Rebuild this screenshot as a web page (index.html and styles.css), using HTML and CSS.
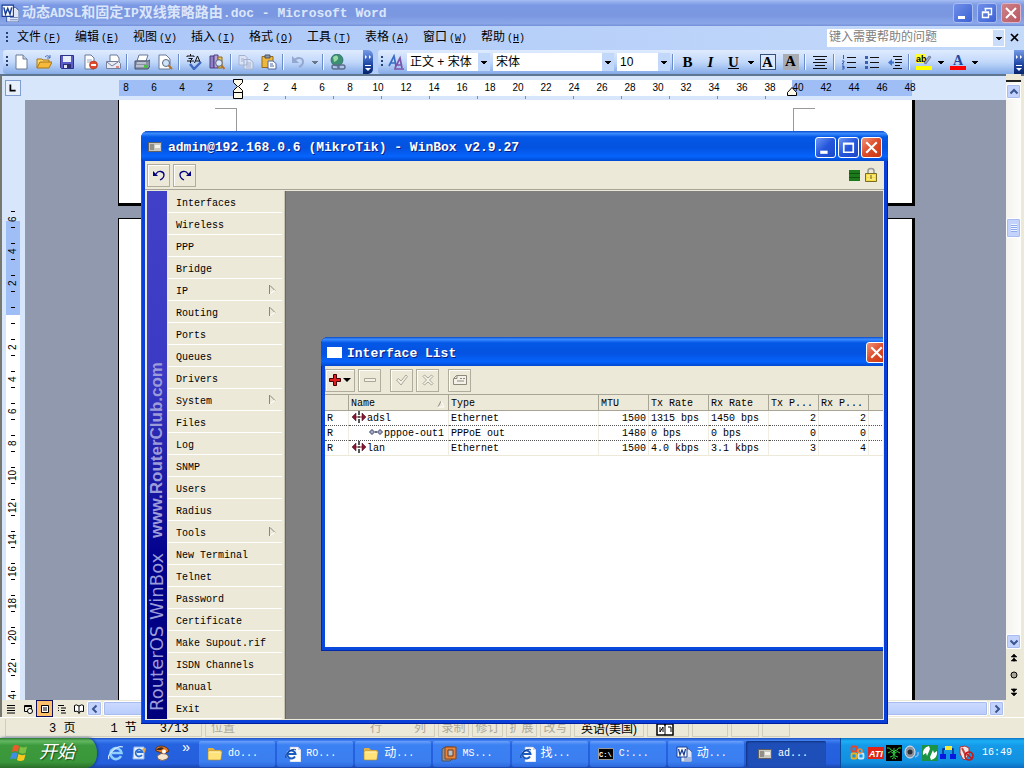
FILE: index.html
```html
<!DOCTYPE html>
<html lang="zh-CN">
<head>
<meta charset="utf-8">
<title>动态ADSL和固定IP双线策略路由.doc - Microsoft Word</title>
<link rel="stylesheet" href="styles.css">
</head>
<body>
<svg width="0" height="0" class="defs" aria-hidden="true">
  <symbol id="tri" viewBox="0 0 8 8"><path d="M1 3h6v1H6v1H5v1H3V5H2V4H1z" fill="#000"/></symbol>
  <symbol id="folder" viewBox="0 0 16 16"><path d="M1 3q0-1 1-1h4l2 2h5q1 0 1 1v8H1z" fill="#e8b33c"/><path d="M1 6q0-1 1-1h12q1 0 1 1l-1 7q0 1-1 1H2q-1 0-1-1z" fill="#ffe27a" stroke="#b98a20" stroke-width=".6"/><path d="M2 6h11" stroke="#fff6c8"/></symbol>
  <symbol id="iedoc" viewBox="0 0 16 16"><path d="M5 1h8l3 3v12H5z" fill="#fff" stroke="#9fb0d0" stroke-width=".6"/><path d="M13 1v3h3" fill="#cdd8ee"/><circle cx="6" cy="8.500" r="4.500" fill="#fff"/><path d="M10 10.500A4 4 0 1 1 10.500 8H3.500" fill="none" stroke="#1c5cc0" stroke-width="2"/><path d="M1 12C-1 8 8 1 11 4" fill="none" stroke="#123c8c"/></symbol>
  <symbol id="worddoc" viewBox="0 0 16 16"><path d="M5 3h8l3 3v10H5z" fill="#dfe6f7" stroke="#274a8c" stroke-width=".7"/><path d="M8 12h7M8 14h7" stroke="#7d8fbf"/><path d="M1 1h10v10H1z" fill="#fff" stroke="#173d94"/><path d="M2.500 3l1.500 6 2-5 2 5 1.500-6" fill="none" stroke="#173d94" stroke-width="1.300"/></symbol>
  <symbol id="router" viewBox="0 0 14 12"><path d="M.5 1.500h13v9H.5z" fill="#c8c8c0" stroke="#606060"/><path d="M2 3h4v6H2z" fill="#909088"/><path d="M7 4h5v3H7z" fill="#f2f2ee"/></symbol>
  <symbol id="sub" viewBox="0 0 7 9"><path d="M.5 9V0" stroke="#8a877a"/><path d="M1 .5l5 5" stroke="#8a877a" fill="none"/><path d="M1 8.500l5-3" stroke="#fff" fill="none"/></symbol>
  <symbol id="eth" viewBox="0 0 14 12"><path d="M0 6l4-4v8zM14 6l-4-4v8z" fill="#8c1630" stroke="#301018" stroke-width=".5"/><path d="M4 5.500h2v1H4zM8 5.500h2v1H8z" fill="#8c1630"/><path d="M7 0v4M7 5v2M7 8v4" stroke="#111" stroke-width="1.400"/></symbol>
  <symbol id="ppp" viewBox="0 0 14 8"><path d="M.5 4L3 1.500 5.500 4 3 6.500zM8.500 4L11 1.500 13.500 4 11 6.500z" fill="#a9afc8" stroke="#333b60"/><path d="M6 4h2" stroke="#333b60" stroke-width="1.500"/></symbol>
</svg>

<main class="word">
  <header class="word-title">
    <svg class="i18" viewBox="0 0 16 16"><use href="#worddoc"/></svg>
    <h1 class="word-name">动态<span class="lt">ADSL</span>和固定<span class="lt">IP</span>双线策略路由<span class="lt">.doc - Microsoft Word</span></h1>
    <div class="caption">
      <button class="cap cap-dim" aria-label="最小化"><svg viewBox="0 0 18 18"><path d="M4 12h7v3H4z" fill="#fff"/></svg></button>
      <button class="cap cap-dim" aria-label="还原"><svg viewBox="0 0 18 18"><path d="M7.500 7V4.500h6v6H11M6.500 4.500h7M4.500 8h6v5.500h-6zM4 8.500h7" fill="none" stroke="#fff" stroke-width="1.400"/></svg></button>
      <button class="cap cap-dimred" aria-label="关闭"><svg viewBox="0 0 18 18"><path d="M4 4l10 10M14 4L4 14" stroke="#fff" stroke-width="2"/></svg></button>
    </div>
  </header>

  <nav class="menubar">
    <span class="grip"></span>
    <a href="#file">文件<span class="sm">(<u>F</u>)</span></a><a href="#edit">编辑<span class="sm">(<u>E</u>)</span></a><a href="#view">视图<span class="sm">(<u>V</u>)</span></a><a href="#insert">插入<span class="sm">(<u>I</u>)</span></a><a href="#format">格式<span class="sm">(<u>O</u>)</span></a><a href="#tools">工具<span class="sm">(<u>T</u>)</span></a><a href="#table">表格<span class="sm">(<u>A</u>)</span></a><a href="#window">窗口<span class="sm">(<u>W</u>)</span></a><a href="#help">帮助<span class="sm">(<u>H</u>)</span></a>
    <div class="ask"><input type="text" aria-label="帮助" placeholder="键入需要帮助的问题"><button class="ask-arrow" aria-label="展开"><svg class="tri" viewBox="0 0 8 8"><use href="#tri"/></svg></button></div>
    <button class="doc-close" aria-label="关闭文档"><svg viewBox="0 0 10 10"><path d="M1 1l7 7M8 1L1 8" stroke="#000" stroke-width="1.700"/></svg></button>
  </nav>

  <div class="toolbars">
    <div class="toolbar">
      <span class="grip"></span>
      <button class="tb" aria-label="新建"><svg viewBox="0 0 16 16"><path d="M3 1h7l4 4v10H3z" fill="#fff" stroke="#6b7895"/><path d="M10 1v4h4" fill="#c9d6ef" stroke="#6b7895"/></svg></button>
      <button class="tb" aria-label="打开"><svg viewBox="0 0 16 16"><path d="M1 14V5h5l1 1h6v3" fill="#ffd56a" stroke="#a87412"/><path d="M1 14l3-6h12l-3 6z" fill="#f6b93c" stroke="#a87412"/><path d="M9 3q3-3 5 1M14 1v3h-3" fill="none" stroke="#4770b8"/></svg></button>
      <button class="tb" aria-label="保存"><svg viewBox="0 0 16 16"><path d="M1.500 1.500h13v13h-12l-1-1z" fill="#5c5cc8" stroke="#303088"/><path d="M4 2h8v6H4z" fill="#e9eefb"/><path d="M4 10h8v4H4z" fill="#2c2c70"/><path d="M5 11h3v3H5z" fill="#e0e4f4"/></svg></button>
      <button class="tb" aria-label="权限"><svg viewBox="0 0 16 16"><path d="M3 1h6l3 3v11H3z" fill="#fff" stroke="#6b7895"/><path d="M5 6h5M5 8h4" stroke="#9aa8c8"/><circle cx="11.500" cy="11" r="4" fill="#e14a2c" stroke="#9c2412" stroke-width=".5"/><path d="M9 11h5" stroke="#fff" stroke-width="1.800"/></svg></button>
      <button class="tb" aria-label="邮件"><svg viewBox="0 0 16 16"><path d="M5 1h7l2 3v5H5z" fill="#fff" stroke="#6b7895"/><path d="M1.500 7.500h12l2 2v5h-14z" fill="#e8ebf4" stroke="#77809a"/><path d="M2 8l5 4 6-4" fill="none" stroke="#77809a"/><path d="M11 12h3v2h-3z" fill="#d88"/></svg></button>
      <span class="sep"></span>
      <button class="tb" aria-label="打印"><svg viewBox="0 0 16 16"><path d="M5 1h9l-2 6H3z" fill="#fff" stroke="#6b7895"/><path d="M1 7h13l2-1v6l-2 3H1z" fill="#8b93a8" stroke="#454e66"/><path d="M3 9h9M2 12h10" stroke="#e8ecf5"/><path d="M10 11h4v3h-4z" fill="#4cbb48"/></svg></button>
      <button class="tb" aria-label="预览"><svg viewBox="0 0 16 16"><path d="M2 1h7l4 4v10H2z" fill="#fff" stroke="#6b7895"/><circle cx="9" cy="9" r="3.500" fill="#cfe4fa" stroke="#5a6780"/><path d="M11.500 11.500l3.500 3.500" stroke="#b5722a" stroke-width="2"/></svg></button>
      <span class="sep"></span>
      <button class="tb" aria-label="拼写"><svg viewBox="0 0 16 16"><path d="M1 3V2h7v1M4.500 0v2M2.500 4.500h4l-2 2V9M1 7h7M8.500 9l3-7 3 7M9.500 7h4" fill="none" stroke="#111"/><path d="M4 10l4 5 7-7" fill="none" stroke="#3f68c0" stroke-width="2.400"/></svg></button>
      <button class="tb" aria-label="信息检索"><svg viewBox="0 0 16 16"><path d="M1 2h4v12H1z" fill="#8f7fc4" stroke="#4b3f80"/><path d="M5 1h4v13H5z" fill="#b9a0d8" stroke="#4b3f80"/><path d="M9 3h4v11H9z" fill="#e9c860" stroke="#8a6d20"/><circle cx="10" cy="9" r="3.300" fill="#dcebfa" stroke="#596680"/><path d="M12.500 11.500l3 3.500" stroke="#b5722a" stroke-width="2"/></svg></button>
      <span class="sep"></span>
      <button class="tb" aria-label="复制"><svg viewBox="0 0 16 16"><path d="M1 1.500h6l2 2V11H1zM6 5.500h6l3 2.500v7H6z" fill="#dbe4f6" stroke="#a5b2cf"/><path d="M3 5h3M3 7h3M8 9h5M8 11h5M8 13h5" stroke="#a5b2cf"/></svg></button>
      <button class="tb" aria-label="粘贴"><svg viewBox="0 0 16 16"><path d="M1 2.500h11v11H1z" fill="#efb73c" stroke="#94691a"/><path d="M4 1h5v3H4z" fill="#8e96aa" stroke="#4b5265"/><path d="M7 7h5l3 2.500V15H7z" fill="#fff" stroke="#4c66a4"/><path d="M9 10h3M9 12h4" stroke="#4c66a4"/></svg></button>
      <span class="sep"></span>
      <button class="tb" aria-label="撤消"><svg viewBox="0 0 16 16"><path d="M4 7c3-4 9-4 9 1 0 2-2 4-4 5" fill="none" stroke="#93a7cf" stroke-width="2"/><path d="M2 2v7h7z" fill="#93a7cf"/></svg></button>
      <button class="arr dim" aria-label="撤消列表"><svg class="tri" viewBox="0 0 8 8"><use href="#tri"/></svg></button>
      <span class="sep"></span>
      <button class="tb" aria-label="超链接"><svg viewBox="0 0 16 16"><circle cx="7" cy="6" r="6" fill="#3d8f74" stroke="#1d5560" stroke-width=".6"/><path d="M3 3q4-3 5 0T4 8z" fill="#9ad8a4"/><rect x="2" y="11" width="7" height="4" rx="2" fill="none" stroke="#5f6d8a" stroke-width="1.400"/><rect x="8" y="11" width="7" height="4" rx="2" fill="none" stroke="#5f6d8a" stroke-width="1.400"/></svg></button>
      <span class="spring"></span>
      <button class="cap-end" aria-label="工具栏选项"><svg viewBox="0 0 10 24"><path d="M2 5l2 2-2 2zM6 5l2 2-2 2z" fill="#fff"/><path d="M2 15.500h6" stroke="#fff"/><path d="M2 18h6l-3 3z" fill="#fff"/></svg></button>
    </div>
    <div class="toolbar toolbar-fmt">
      <span class="grip"></span>
      <button class="tb" aria-label="样式和格式"><svg viewBox="0 0 16 16"><path d="M1 12L6 2l2 10M3 9h5" fill="none" stroke="#3a6cc4" stroke-width="1.700"/><path d="M7 14l5-10 2 10M9 11h5M6 15h10" fill="none" stroke="#7b55a8" stroke-width="1.700"/></svg></button>
      <span class="combo combo-style"><select aria-label="样式"><option>正文 + 宋体</option></select><svg viewBox="0 0 8 8"><use href="#tri"/></svg></span>
      <span class="combo combo-font"><select aria-label="字体"><option>宋体</option></select><svg viewBox="0 0 8 8"><use href="#tri"/></svg></span>
      <span class="combo combo-size"><select aria-label="字号"><option>10</option></select><svg viewBox="0 0 8 8"><use href="#tri"/></svg></span>
      <span class="sep"></span>
      <button class="tb ltr"><b>B</b></button>
      <button class="tb ltr"><i>I</i></button>
      <button class="tb ltr"><u>U</u></button>
      <button class="arr" aria-label="下划线列表"><svg class="tri" viewBox="0 0 8 8"><use href="#tri"/></svg></button>
      <button class="tb ltr"><span class="boxed">A</span></button>
      <button class="tb ltr"><span class="shaded">A</span></button>
      <span class="sep"></span>
      <button class="tb" aria-label="两端对齐"><svg viewBox="0 0 16 16"><path d="M1 2.500h14M3 5.500h10M1 8.500h14M3 11.500h10M1 14.500h14" stroke="#111"/></svg></button>
      <span class="sep"></span>
      <button class="tb" aria-label="编号"><svg viewBox="0 0 16 16"><path d="M6 3.500h9M6 8.500h9M6 13.500h9" stroke="#111"/><path d="M2.500 1v4M1 7h2v1L1 10h2M1 12h2v1H1.500 3v2H1" fill="none" stroke="#3a5fae"/></svg></button>
      <button class="tb" aria-label="项目符号"><svg viewBox="0 0 16 16"><path d="M6 3.500h9M6 8.500h9M6 13.500h9" stroke="#111"/><path d="M1 2h3v3H1zM1 7h3v3H1zM1 12h3v3H1z" fill="#3a5fae"/></svg></button>
      <button class="tb" aria-label="缩进"><svg viewBox="0 0 16 16"><path d="M6 2.500h9M8 5.500h7M8 8.500h7M8 11.500h5M6 14.500h9" stroke="#111"/><path d="M5 5v7L1 8.500z" fill="#3f73cf"/><path d="M4 8.500h3" stroke="#3f73cf" stroke-width="2"/></svg></button>
      <span class="sep"></span>
      <button class="tb" aria-label="突出显示"><svg viewBox="0 0 16 16"><path d="M0 0h10v9H0z" fill="#ffff30"/><text x="0" y="8" class="ab">ab</text><path d="M8 9l5-7 2 1-5 7z" fill="#9aa7c4" stroke="#4c5878" stroke-width=".6"/><path d="M0 12h16v4H0z" fill="#ff0"/></svg></button>
      <button class="arr" aria-label="突出显示列表"><svg class="tri" viewBox="0 0 8 8"><use href="#tri"/></svg></button>
      <button class="tb" aria-label="字体颜色"><svg viewBox="0 0 16 16"><text x="3" y="11" class="fa">A</text><path d="M0 12h16v4H0z" fill="#f00"/></svg></button>
      <button class="arr" aria-label="颜色列表"><svg class="tri" viewBox="0 0 8 8"><use href="#tri"/></svg></button>
      <span class="spring"></span>
      <button class="cap-end" aria-label="工具栏选项"><svg viewBox="0 0 10 24"><path d="M2 5l2 2-2 2zM6 5l2 2-2 2z" fill="#fff"/><path d="M2 15.500h6" stroke="#fff"/><path d="M2 18h6l-3 3z" fill="#fff"/></svg></button>
    </div>
  </div>

  <div class="work">
    <div class="editor">
      <div class="hruler">
        <div class="tab-box"><svg viewBox="0 0 16 16"><path d="M5 4v7h6" fill="none" stroke="#000" stroke-width="2"/></svg></div>
        <div class="htrack">
          <div class="hnums"><span>8</span><span>6</span><span>4</span><span>2</span><span class="mark"><svg viewBox="0 0 10 22"><path d="M.5 1.500h9v3l-4 4 4 4v2h-9v-2l4-4-4-4zM.5 14.500h9v6h-9z" fill="#fdf9e8" stroke="#000"/></svg></span><span>2</span><span>4</span><span>6</span><span>8</span><span>10</span><span>12</span><span>14</span><span>16</span><span>18</span><span>20</span><span>22</span><span>24</span><span>26</span><span>28</span><span>30</span><span>32</span><span>34</span><span>36</span><span>38</span><span class="indent">40<svg viewBox="0 0 10 9"><path d="M.5 8.500v-3l4.500-5 4.500 5v3z" fill="#fdf9e8" stroke="#000"/></svg></span><span>42</span><span>44</span><span>46</span><span>48</span></div>
          <div class="hticks"></div>
        </div>
      </div>
      <div class="body">
        <div class="vruler"><div class="vtrack">
          <span>6</span><span>4</span><span>2</span><span></span><span>2</span><span>4</span><span>6</span><span>8</span><span>10</span><span>12</span><span>14</span><span>16</span><span>18</span><span>20</span><span>22</span><span>24</span>
        </div></div>
        <div class="doc">
          <div class="page page-a"><svg viewBox="0 0 22 24"><path d="M0 .5h22M21.500 0v24" stroke="#999"/></svg><svg viewBox="0 0 22 24"><path d="M0 .5h22M.5 0v24" stroke="#999"/></svg></div>
          <div class="page page-b"></div>
        </div>
      </div>
      <div class="hscroll">
        <button class="view" aria-label="普通视图"><svg viewBox="0 0 12 12"><path d="M2 2.500h8M2 5h8M2 7.500h8M2 10h8" stroke="#000"/></svg></button>
        <button class="view" aria-label="Web版式"><svg viewBox="0 0 12 12"><path d="M2.500 2.500h7v6h-7zM2 3.500h8" fill="none" stroke="#000"/><circle cx="8" cy="8" r="2.500" fill="#fff" stroke="#000"/></svg></button>
        <button class="view on" aria-label="页面视图"><svg viewBox="0 0 12 12"><path d="M2.500 2.500h7v7h-7z" fill="#fff" stroke="#000"/><path d="M4 5h4M4 7h4" stroke="#000"/></svg></button>
        <button class="view" aria-label="大纲视图"><svg viewBox="0 0 12 12"><path d="M2 2.500h6M5 5h5M5 7.500h4M5 10h5M2 5h1M2 7.500h1" stroke="#000"/></svg></button>
        <button class="view" aria-label="阅读版式"><svg viewBox="0 0 12 12"><path d="M6 3Q3 1 1.500 2.500v6Q4 7.500 6 9.500 8 7.500 10.500 8.500v-6Q9 1 6 3zM6 3v8" fill="#fff" stroke="#000"/></svg></button>
        <button class="sb" aria-label="左移"><svg viewBox="0 0 10 10"><path d="M6.500 1.500L3 5l3.500 3.500" fill="none" stroke="#3a5590" stroke-width="2"/></svg></button>
        <span class="thumb-h"></span>
        <button class="sb" aria-label="右移"><svg viewBox="0 0 10 10"><path d="M3.500 1.500L7 5 3.500 8.500" fill="none" stroke="#3a5590" stroke-width="2"/></svg></button>
      </div>
    </div>
    <div class="vscroll">
      <span class="split"></span>
      <button class="sb" aria-label="上移"><svg viewBox="0 0 10 10"><path d="M1.500 6.500L5 3l3.500 3.500" fill="none" stroke="#3a5590" stroke-width="2"/></svg></button>
      <span class="vgap-a"></span>
      <span class="thumb-v"></span>
      <span class="vgap-b"></span>
      <button class="sb" aria-label="下移"><svg viewBox="0 0 10 10"><path d="M1.500 3.500L5 7l3.500-3.500" fill="none" stroke="#3a5590" stroke-width="2"/></svg></button>
      <button class="nav" aria-label="前一页"><svg viewBox="0 0 10 10"><path d="M5 1l3 3H2zM5 5l3 3H2zM5 3v6" stroke="#000" stroke-width=".5"/></svg></button>
      <button class="nav" aria-label="选择浏览对象"><svg viewBox="0 0 10 10"><circle cx="5" cy="5" r="3" fill="#a9a697" stroke="#000"/></svg></button>
      <button class="nav" aria-label="下一页"><svg viewBox="0 0 10 10"><path d="M5 9l3-3H2zM5 5l3-3H2zM5 1v6" stroke="#000" stroke-width=".5"/></svg></button>
    </div>
  </div>

  <footer class="status">
    <div class="panel p-page"><span>3 页</span><span>1 节</span><span>3/13</span></div>
    <div class="panel p-pos"><span>位置</span><span>行</span><span>列</span></div>
    <div class="panel off">录制</div><div class="panel off">修订</div><div class="panel off">扩展</div><div class="panel off">改写</div>
    <div class="panel lang">英语(美国)</div>
    <div class="panel book"><svg viewBox="0 0 18 14"><path d="M1 2h7l1 1 1-1h7v11H1z" fill="#fff" stroke="#000" stroke-width="1.500"/><path d="M9 3v10M4 5v5l3-5v5M12 5h3v5" fill="none" stroke="#000"/></svg></div>
    <div class="panel e1"></div><div class="panel e2"></div><div class="panel e3"></div>
  </footer>
</main>

<section class="winbox">
  <header class="wtitle">
    <svg class="wicon" viewBox="0 0 14 12"><use href="#router"/></svg>
    <h2>admin@192.168.0.6 (MikroTik) - WinBox v2.9.27</h2>
    <button class="cap cap-blue" aria-label="最小化"><svg viewBox="0 0 18 18"><path d="M4 12h7v3H4z" fill="#fff"/></svg></button>
    <button class="cap cap-blue" aria-label="最大化"><svg viewBox="0 0 18 18"><path d="M4.500 5h9v8.500h-9zM4 5.500h10" fill="none" stroke="#fff" stroke-width="1.600"/></svg></button>
    <button class="cap cap-red" aria-label="关闭"><svg viewBox="0 0 18 18"><path d="M4 4l10 10M14 4L4 14" stroke="#fff" stroke-width="2"/></svg></button>
  </header>
  <div class="wtools">
    <button class="sq" aria-label="Undo"><svg viewBox="0 0 14 12"><path d="M4 5c2-4 8-3 8 1 0 3-2 4-4 5" fill="none" stroke="#000080" stroke-width="1.300"/><path d="M1 2v5h5z" fill="#000080"/></svg></button>
    <button class="sq" aria-label="Redo"><svg viewBox="0 0 14 12"><path d="M10 5C8 1 2 2 2 6c0 3 2 4 4 5" fill="none" stroke="#000080" stroke-width="1.300"/><path d="M13 2v5H8z" fill="#000080"/></svg></button>
    <span class="spring"></span>
    <span class="load"></span>
    <svg class="lock" viewBox="0 0 14 16"><path d="M4 7V4q0-2.500 3-2.500T10 4v3" fill="none" stroke="#999" stroke-width="1.600"/><path d="M1.500 6.500h11v8h-11z" fill="#f4dc48" stroke="#7a6c20"/><path d="M3 9h8M3 12h8" stroke="#fff7a8"/><path d="M7 8v4" stroke="#6b5c10"/></svg>
  </div>
  <div class="wbody">
    <aside class="stripe"><span class="s1">RouterOS WinBox</span><span class="s2">www.RouterClub.com</span></aside>
    <nav class="wmenu">
      <button>Interfaces</button><button>Wireless</button><button>PPP</button><button>Bridge</button>
      <button>IP<svg viewBox="0 0 7 9"><use href="#sub"/></svg></button><button>Routing<svg viewBox="0 0 7 9"><use href="#sub"/></svg></button>
      <button>Ports</button><button>Queues</button><button>Drivers</button>
      <button>System<svg viewBox="0 0 7 9"><use href="#sub"/></svg></button>
      <button>Files</button><button>Log</button><button>SNMP</button><button>Users</button><button>Radius</button>
      <button>Tools<svg viewBox="0 0 7 9"><use href="#sub"/></svg></button>
      <button>New Terminal</button><button>Telnet</button><button>Password</button><button>Certificate</button><button>Make Supout.rif</button><button>ISDN Channels</button><button>Manual</button><button>Exit</button>
    </nav>
    <div class="mdi">
      <section class="ilist">
        <header class="wtitle">
          <span class="blank"></span>
          <h2>Interface List</h2>
          <button class="cap cap-red" aria-label="关闭"><svg viewBox="0 0 18 18"><path d="M4 4l10 10M14 4L4 14" stroke="#fff" stroke-width="2"/></svg></button>
        </header>
        <div class="itools">
          <button class="sq add" aria-label="Add"><svg viewBox="0 0 22 12"><path d="M4.500.5h3v4h4v3h-4v4h-3v-4h-4v-3h4z" fill="#e02020" stroke="#400"/><path d="M14 4h8l-4 4z" fill="#000"/></svg></button>
          <button class="sq" aria-label="Remove"><svg viewBox="0 0 14 12"><path d="M1.500 4.500h11v3h-11z" fill="#f4f2e8" stroke="#aaa796"/></svg></button>
          <button class="sq gap" aria-label="Enable"><svg viewBox="0 0 14 12"><path d="M1.500 6l2-1.500L6 7l5-6 1.500 1.500L6 11z" fill="#f4f2e8" stroke="#aaa796"/></svg></button>
          <button class="sq" aria-label="Disable"><svg viewBox="0 0 14 12"><path d="M2 2.500L3.500 1 7 4l3.500-3L12 2.500 8.500 6l3.500 3.500-1.500 1.500L7 8l-3.500 3L2 9.500 5.500 6z" fill="#f4f2e8" stroke="#aaa796"/></svg></button>
          <button class="sq gap" aria-label="Comment"><svg viewBox="0 0 14 12"><path d="M.5 4.500l3-3h10v9H.5z" fill="#f4f2e8" stroke="#8d8a7c"/><path d="M4 1.500v3H1M7 4.500h2M10 4.500h2M4 7h7" fill="none" stroke="#8d8a7c"/></svg></button>
        </div>
        <div class="igrid">
        <table>
          <colgroup><col class="c24"><col class="c100"><col class="c150"><col class="c50"><col class="c60"><col class="c60"><col class="c50"><col class="c50"><col></colgroup>
          <thead><tr><th></th><th>Name<svg class="sort" viewBox="0 0 8 8"><path d="M1 7l3-6" stroke="#8a877a"/><path d="M4 1l3 6H1" fill="none" stroke="#fff"/></svg></th><th>Type</th><th>MTU</th><th>Tx Rate</th><th>Rx Rate</th><th>Tx P...</th><th>Rx P...</th><th></th></tr></thead>
          <tbody>
            <tr><td>R</td><td><svg class="ic" viewBox="0 0 14 12"><use href="#eth"/></svg>adsl</td><td>Ethernet</td><td class="n">1500</td><td>1315 bps</td><td>1450 bps</td><td class="n">2</td><td class="n">2</td><td></td></tr>
            <tr class="cur"><td>R</td><td class="child"><svg class="ic" viewBox="0 0 14 8"><use href="#ppp"/></svg>pppoe-out1</td><td>PPPoE out</td><td class="n">1480</td><td>0 bps</td><td>0 bps</td><td class="n">0</td><td class="n">0</td><td></td></tr>
            <tr><td>R</td><td><svg class="ic" viewBox="0 0 14 12"><use href="#eth"/></svg>lan</td><td>Ethernet</td><td class="n">1500</td><td>4.0 kbps</td><td>3.1 kbps</td><td class="n">3</td><td class="n">4</td><td></td></tr>
          </tbody>
        </table>
        </div>
      </section>
    </div>
  </div>
</section>

<footer class="taskbar">
  <button class="start"><svg viewBox="0 0 20 18"><path d="M3 2q3-2 6 0L8 8Q5 6 2 8z" fill="#f05a28"/><path d="M10 2.500q3 2 7 0L15.500 9Q12 10.500 9 8.500z" fill="#7cc242"/><path d="M1.500 9.500q3-2 6 0L6 15.500q-3-2-6 0z" fill="#3d8fe8"/><path d="M8.500 10q3 2 7 .5L14 16q-4 2-7 0z" fill="#fbc81e"/></svg><span>开始</span></button>
  <div class="quick">
    <a href="#ie" aria-label="Internet Explorer"><svg viewBox="0 0 16 16"><path d="M13 11A5.500 5.500 0 1 1 13.500 8H4" fill="none" stroke="#8fd0ff" stroke-width="2.600"/><path d="M1 14C-2 11 8 0 15 2" fill="none" stroke="#cfe9ff" stroke-width="1.300"/></svg></a>
    <a href="#mail" aria-label="Outlook Express"><svg viewBox="0 0 16 16"><path d="M3 2h10v12H2z" fill="#e9f3ff" stroke="#8fb4e8"/><path d="M11 10A3.500 3.500 0 1 1 11.500 7H6" fill="none" stroke="#2a6fd0" stroke-width="1.800"/><path d="M11 4l4-1-1 5z" fill="#e8a83c"/></svg></a>
    <a href="#media" aria-label="Player"><svg viewBox="0 0 16 16"><path d="M2 6q-1-5 5-5 6 0 8 5l-5 3-5-2z" fill="#e87a24" stroke="#40281c" stroke-width=".8"/><path d="M2 5q3-4 8-2l-3 2z" fill="#40281c"/><path d="M3 11q4-4 9-2 4 2 1 5-5 3-9 0z" fill="#f5e6d0" stroke="#7a4c28" stroke-width=".8"/><circle cx="10" cy="6.500" r="2" fill="#fff"/></svg></a>
    <span class="more">»</span>
  </div>
  <div class="tasks">
    <button class="task"><svg viewBox="0 0 16 16"><use href="#folder"/></svg>do...</button>
    <button class="task"><svg viewBox="0 0 16 16"><use href="#iedoc"/></svg>RO...</button>
    <button class="task"><svg viewBox="0 0 16 16"><use href="#folder"/></svg><span class="zh">动</span>...</button>
    <button class="task"><svg viewBox="0 0 16 16"><path d="M1 3l3-2h8v11l-3 3H1z" fill="#8a8f9c" stroke="#4c515c"/><path d="M4 1h11v12H4z" fill="#e8833a" stroke="#8a4412"/><path d="M7 4h5v6H7z" fill="#b9c0cc" stroke="#6a3a18"/></svg>MS...</button>
    <button class="task"><svg viewBox="0 0 16 16"><use href="#iedoc"/></svg><span class="zh">找</span>...</button>
    <button class="task"><svg viewBox="0 0 16 16"><path d="M.5 2.500h15v11H.5z" fill="#000" stroke="#999"/><text x="1" y="11" class="cmd">C:\</text></svg>C:...</button>
    <button class="task"><svg viewBox="0 0 16 16"><use href="#worddoc"/></svg><span class="zh">动</span>...</button>
    <button class="task on"><svg viewBox="0 0 14 12"><use href="#router"/></svg>ad...</button>
  </div>
  <div class="tray">
    <svg viewBox="0 0 16 16"><rect x="1.500" y="1.500" width="5" height="5" rx="1" fill="none" stroke="#e8442c" stroke-width="1.800"/><rect x="1.500" y="8.500" width="5" height="5" rx="1" fill="none" stroke="#e8b020" stroke-width="1.800"/><rect x="8.500" y="8.500" width="5" height="5" rx="1" fill="none" stroke="#c8e8ff" stroke-width="1.800"/><circle cx="10" cy="6" r="2" fill="none" stroke="#f08838" stroke-width="1.500"/></svg>
    <svg viewBox="0 0 16 16"><path d="M0 2h16v12H0z" fill="#e02418"/><text x="1" y="12" class="ati">ATI</text></svg>
    <svg viewBox="0 0 16 16"><path d="M0 0h16v16H0z" fill="#000"/><path d="M1 3q3-1 4 2M15 3q-3-1-4 2M8 3v9M2 8q3-3 5 0t-3 4M14 8q-3-3-5 0t3 4M5 5q3 0 3 3 0-3 3-3M6 14q2-3 4 0" fill="none" stroke="#30d040"/></svg>
    <svg viewBox="0 0 16 16"><ellipse cx="6" cy="7" rx="5" ry="6" fill="#8c929c" stroke="#e4e8ee"/><circle cx="6" cy="7" r="2.500" fill="#2c3038"/><path d="M11 12q4-1 3-5" fill="none" stroke="#8fb8f0" stroke-width="1.500"/></svg>
    <svg viewBox="0 0 16 16"><path d="M0 0h16v16H0z" fill="#1a9444"/><path d="M7 1Q0 3 1 10l3-2 1 3 3-7zM9 15q7-2 6-9l-3 2-1-3-3 7z" fill="#fff"/></svg>
    <svg viewBox="0 0 16 16"><path d="M5 1h7v4H5z" fill="#f4e838"/><path d="M3 10V4h2M12 4h1v6" fill="none" stroke="#0a2080" stroke-width="1.300"/><path d="M0 9h6v5H0zM10 9h6v5h-6z" fill="#0818e0"/></svg>
    <svg viewBox="0 0 16 16"><path d="M2 2l5-1 4 2v6q-2 4-5 6-3-3-4-7z" fill="#f0e8e8" stroke="#b03030"/><path d="M4 3l4 8" stroke="#c04040" stroke-width="2"/><circle cx="11" cy="11" r="4" fill="none" stroke="#c81818" stroke-width="1.600"/><path d="M8 8l6 6" stroke="#c81818" stroke-width="1.600"/></svg>
    <time>16:49</time>
  </div>
</footer>
</body>
</html>
```
FILE: styles.css
```css
* { box-sizing: border-box; }
html, body { height: 100%; }
body {
  margin: 0;
  display: flex;
  flex-direction: column;
  position: relative;
  overflow: hidden;
  background: #ece9d8;
  color: #000;
  font: 12px/16px "Liberation Mono", "Noto Sans CJK SC", monospace;
}
button, input, select { font: inherit; color: inherit; margin: 0; padding: 0; border: 0; background: none; border-radius: 0; }
a { color: inherit; text-decoration: none; }
h1, h2 { margin: 0; font-size: 13px; }
svg { display: block; flex: none; }
.defs { position: absolute; }
.spring { flex: 1; }
.sm { font-size: 10px; margin-left: 2px; }

/* Word window */
.word { flex: 1; min-height: 0; display: flex; flex-direction: column; }
.word-title {
  height: 26px; flex: none; display: flex; align-items: center; gap: 3px; padding: 0 3px 0 1px;
  background: linear-gradient(#a5bdf2, #7b98e4 20%, #7a97e0 60%, #8ba7ea 90%, #7590d8);
}
.i18 { width: 18px; height: 18px; }
.word-name { flex: 1; color: #dce6fb; font-size: 14px; line-height: 20px; white-space: nowrap; }
.lt { font-size: 13px; }
.caption { display: flex; gap: 4px; }
.cap { width: 20px; height: 20px; border: 1px solid #fff; border-radius: 3px; }
.cap svg { width: 18px; height: 18px; }
.cap-dim { background: linear-gradient(135deg, #6f8fe8, #3c62d4); border-color: #a9bcf0; }
.cap-dimred { background: linear-gradient(135deg, #cf8288, #b75863); border-color: #dcb4c8; }
.cap-blue { background: linear-gradient(135deg, #6c96f4, #2456dc 50%, #1c48c8); }
.cap-red { background: linear-gradient(135deg, #f09478, #dc4a28 50%, #c83810); }

.menubar {
  height: 24px; flex: none; display: flex; align-items: center; padding-left: 6px;
  background: linear-gradient(90deg, #a9c5f8, #c4dafa);
}
.menubar > a { width: 58px; white-space: nowrap; }
.grip {
  flex: none; width: 3px; height: 12px; margin-right: 8px;
  background: repeating-linear-gradient(#274176 0 2px, transparent 2px 4px) 0 0 / 2px 12px no-repeat;
}
.ask { margin-left: auto; width: 178px; height: 18px; display: flex; background: #fff; }
.ask input { flex: 1; min-width: 0; padding-left: 2px; outline: 0; }
.ask input::placeholder { color: #808080; opacity: 1; }
.ask-arrow { width: 13px; background: #c9dcfa; border: 1px solid #fff; display: grid; place-items: center; }
.tri { width: 8px; height: 8px; }
.doc-close { width: 19px; display: grid; place-items: center; }
.doc-close svg { width: 10px; height: 10px; }

.toolbars {
  height: 26px; flex: none; display: flex; gap: 5px; padding-left: 3px;
  background: #b4cdf9; border-bottom: 2px solid #5f7690;
}
.toolbar {
  flex: none; width: 370px; height: 24px; display: flex; align-items: center; padding-left: 3px; overflow: hidden;
  border-radius: 3px 5px 5px 3px; background: linear-gradient(#dfebfe, #c2d8fa 50%, #84abe8);
}
.toolbar-fmt { flex: 1; min-width: 0; border-radius: 3px 0 0 3px; }
.toolbar .grip { margin-right: 0; }
.tb { flex: none; width: 23px; height: 22px; display: grid; place-items: center; }
.tb svg { width: 16px; height: 16px; }
.sep { flex: none; width: 6px; height: 16px; border-left: 1px solid #6a8ccb; margin-left: 2px; margin-right: -2px; box-shadow: inset 1px 0 #f1f9ff; }
.arr { flex: none; width: 11px; height: 20px; display: grid; place-items: center; }
.dim { opacity: .45; }
.cap-end { flex: none; align-self: stretch; width: 10px; background: linear-gradient(#759ce8, #1d45a4 60%, #06246c); }
.cap-end svg { width: 10px; height: 24px; }
.combo { flex: none; display: grid; height: 18px; margin-right: 3px; background: #fff; align-items: center; overflow: hidden; }
.combo select { grid-area: 1 / 1; width: 100%; height: 18px; padding-left: 3px; appearance: none; font-family: "Liberation Sans", "Noto Sans CJK SC", sans-serif; }
.combo svg { grid-area: 1 / 1; justify-self: end; width: 12px; height: 18px; padding: 0 2px; background: #c2d8fa; pointer-events: none; }
.combo-style { width: 83px; }
.combo-font { width: 121px; }
.combo-size { width: 53px; margin-right: 0; }
.ltr { font: bold 15px/18px "Liberation Serif", serif; }
.boxed, .shaded { width: 16px; height: 16px; line-height: 14px; text-align: center; }
.boxed { border: 1px solid #33507e; background: #dce8fb; }
.shaded { background: #a9acb4; }
.ab { font: bold 9px "Liberation Sans", sans-serif; }
.fa { font: bold 14px "Liberation Serif", serif; fill: #24479a; }

.work { flex: 1; min-height: 0; display: flex; border-left: 2px solid #77786f; }
.editor { flex: 1; min-width: 0; display: flex; flex-direction: column; }
.hruler { height: 24px; flex: none; display: flex; padding: 4px 0 0 3px; background: #d8e6fc; }
.tab-box { width: 16px; height: 16px; border: 1px solid #7f9dd0; background: #e8f0fc; flex: none; }
.tab-box svg { width: 14px; height: 14px; }
.htrack { width: 793px; margin-left: 98px; }
.hnums {
  height: 16px; display: flex; font: 10px/16px "Liberation Sans", sans-serif;
  background: linear-gradient(90deg, #9ebef5 118px, #fff 118px 673px, #9ebef5 673px);
}
.hnums span { flex: none; width: 28px; text-align: center; }
.hnums span:first-child { margin-left: -7px; }
.mark svg { width: 10px; height: 22px; margin: -2px auto 0; }
.indent { position: relative; }
.indent svg { position: absolute; left: 3px; bottom: 0; width: 10px; height: 9px; }
.hticks { height: 3px; margin: 0 140px 0 166px; background: repeating-linear-gradient(90deg, #7c8db0 0 1px, transparent 1px 48px); }

.body { flex: 1; min-height: 0; display: flex; overflow: hidden; }
.vruler { width: 23px; flex: none; background: #d8e6fc; padding: 103px 4px 0; overflow: hidden; }
.vtrack {
  width: 14px; font: 10px/14px "Liberation Sans", sans-serif;
  background: linear-gradient(transparent 18px, #9ebef5 18px 112px, #fff 112px);
}
.vtrack span {
  display: flex; width: 14px; height: 32px; align-items: center; justify-content: center;
  writing-mode: vertical-rl; transform: rotate(180deg);
  background: linear-gradient(transparent 7px, #000 7px 8px, transparent 8px 23px, #000 23px 24px, transparent 24px) 50% 0 / 4px 32px no-repeat;
}
.doc { flex: 1; min-width: 0; display: flex; flex-direction: column; gap: 12px; padding: 0 91px 0 93px; background: #9199ae; }
.page { background: #fff; border: 1px solid #000; border-right-width: 3px; }
.page-a { flex: none; height: 106px; border-top: 0; border-bottom-width: 3px; display: flex; justify-content: space-between; padding: 8px 97px 0 96px; }
.page-a svg { width: 22px; height: 24px; }
.page-b { flex: 1; border-bottom: 0; }

.hscroll { height: 17px; flex: none; display: flex; align-items: center; padding-right: 2px; background: #ece9d8; }
.view { width: 17px; height: 17px; flex: none; display: grid; place-items: center; }
.view svg { width: 12px; height: 12px; }
.view.on { background: #ffc06c; border: 1px solid #101060; }
.sb { flex: none; width: 15px; height: 15px; border: 1px solid #fff; border-radius: 2px; background: #c3d3fc; box-shadow: inset 0 0 0 1px #a8bcf0; display: grid; place-items: center; }
.sb svg { width: 10px; height: 10px; }
.thumb-h { flex: 1; height: 15px; margin: 0 1px; border: 1px solid #fff; border-radius: 2px; background: linear-gradient(#cbdafe, #b8cbfb); box-shadow: inset 0 0 0 1px #a8bcf0; }
.vscroll { flex: none; width: 18px; padding-right: 3px; display: flex; flex-direction: column; background: linear-gradient(90deg, #f4f3ee, #fdfdfb 15px, #ece9d8 15px); }
.split { height: 8px; background: #ece9d8; border-bottom: 2px solid #222; flex: none; margin-top: -2px; margin-bottom: 2px; }
.vgap-a { flex: 119; }
.vgap-b { flex: 395; }
.thumb-v {
  flex: none; height: 20px; border: 1px solid #fff; border-radius: 2px;
  background: repeating-linear-gradient(#eef4fe 0 1px, #8fabf0 1px 2px) 50% 50% / 6px 8px no-repeat, #c3d3fc; box-shadow: inset 0 0 0 1px #a8bcf0;
}
.nav { flex: none; height: 17px; display: grid; place-items: center; background: #ece9d8; }
.nav svg { width: 10px; height: 10px; }
.nav:last-child { height: 34px; align-content: start; padding-top: 4px; }

.status { height: 21px; flex: none; display: flex; gap: 3px; padding: 1px 0 0 5px; background: #ece9d8; border-top: 1px solid #fff; }
.panel { border: 1px solid #d2cebd; border-top: 0; flex: none; height: 18px; line-height: 20px; white-space: nowrap; text-align: center; }
.p-page { width: 197px; display: flex; gap: 35px; padding-left: 43px; }
.p-page > span:last-child { margin-left: -12px; }
.p-pos { width: 230px; display: flex; justify-content: space-between; padding: 0 8px 0 5px; color: #aca899; }
.p-pos span:nth-child(2) { margin-left: auto; margin-right: 32px; }
.off { width: 31px; color: #aca899; }
.lang { width: 70px; font-family: "Liberation Sans", "Noto Sans CJK SC", sans-serif; }
.book { width: 42px; padding: 3px 0 0 8px; }
.book svg { width: 18px; height: 14px; }
.e1 { width: 36px; }
.e2, .e3 { width: 28px; }

/* WinBox window */
.winbox {
  position: absolute; left: 141px; top: 131px; width: 747px; height: 593px;
  display: flex; flex-direction: column; padding: 0 4px 4px;
  background: #0a40d8; border-radius: 7px 7px 0 0; box-shadow: inset -1px -1px #001ea0, inset 1px 0 #1a5cf0;
  font-size: 10px;
}
.wtitle {
  height: 30px; flex: none; display: flex; align-items: center; gap: 2px; margin: 0 -4px; padding: 2px 6px 0 7px;
  border-radius: 7px 7px 0 0;
  background: linear-gradient(#0a4cc8, #3c8cff 8%, #0458e6 20%, #0452e0 55%, #0664fc 85%, #0048d0);
}
.wtitle h2 { flex: 1; padding-top: 2px; color: #fff; font-size: 13px; line-height: 20px; text-shadow: 1px 1px #0a1f80; white-space: nowrap; }
.wtitle .cap { width: 21px; height: 21px; }
.wtitle .cap svg { width: 19px; height: 19px; }
.wicon { width: 14px; height: 12px; margin-right: 4px; }
.wtools { height: 29px; flex: none; display: flex; align-items: center; gap: 3px; padding: 0 6px 0 2px; background: #ece9d8; border-bottom: 1px solid #a8a596; }
.sq {
  width: 23px; height: 23px; display: grid; place-items: center;
  border: 1px solid #b0ad9c; box-shadow: inset 1px 1px #fff; background: #ece9d8;
}
.sq svg { width: 14px; height: 12px; }
.load { width: 11px; height: 11px; background: repeating-linear-gradient(#1c7a1c 0 3px, #0c560c 3px 4px); margin-right: 1px; }
.lock { width: 14px; height: 16px; }
.wbody { flex: 1; min-height: 0; display: flex; padding: 1px 1px 1px 2px; background: #ece9d8; }
.stripe {
  width: 20px; flex: none; display: flex; gap: 15px; align-items: center;
  writing-mode: vertical-rl; transform: rotate(180deg); padding-top: 8px;
  background: linear-gradient(#00007c, #00008c 30%, #3a3ac4 65%, #4040c8);
  color: #9c9cd8; white-space: nowrap;
}
.s1 { font: 18px/20px "DejaVu Sans", sans-serif; }
.s2 { font: bold 17px/20px "Liberation Sans", sans-serif; }
.wmenu { width: 118px; flex: none; display: flex; flex-direction: column; padding: 0 2px 0 1px; border-right: 1px solid #c8c5b4; }
.wmenu button { flex: 1; min-height: 0; display: flex; align-items: center; padding: 4px 6px 0 8px; border-bottom: 1px solid #fff; line-height: 12px; white-space: nowrap; }
.wmenu svg { width: 7px; height: 9px; margin: 0 0 4px auto; }
.mdi { flex: 1; min-width: 0; position: relative; overflow: hidden; background: #808080; border-left: 1px solid #686868; }
.ilist {
  position: absolute; left: 35px; right: -9px; top: 146px; bottom: 68px;
  display: flex; flex-direction: column; padding: 0 4px 4px;
  background: #0a48dc; border-radius: 7px 7px 0 0; box-shadow: inset 1px -1px #0028a8;
}
.ilist .wtitle { height: 29px; padding: 2px 5px 0 6px; }
.blank { width: 15px; height: 11px; background: #fff; margin-right: 3px; }
.itools { height: 28px; flex: none; display: flex; align-items: center; gap: 3px; background: #ece9d8; }
.add { width: 30px; }
.add svg { width: 22px; height: 12px; }
.gap { margin-left: 6px; }
.igrid { flex: 1; min-height: 0; background: #fff; overflow: hidden; }
.igrid table { width: 100%; table-layout: fixed; border-collapse: separate; border-spacing: 0; line-height: 12px; }
.c24 { width: 24px; }
.c50 { width: 50px; }
.c60 { width: 60px; }
.c100 { width: 100px; }
.c150 { width: 150px; }
.igrid th { height: 17px; padding: 2px 0 0 2px; font-weight: normal; text-align: left; background: #ece9d8; border: 1px solid #a8a596; border-left: 0; position: relative; white-space: nowrap; }
.sort { position: absolute; right: 3px; top: 5px; width: 8px; height: 8px; }
.igrid td { height: 15px; padding: 2px 0 0 2px; border-right: 1px solid #efede2; border-bottom: 1px solid #ece9d8; white-space: nowrap; }
.igrid tbody tr:first-child td, .igrid .cur td { border-bottom: 1px dotted #555; }
.igrid .n { text-align: right; padding-right: 2px; }
.igrid .child { padding-left: 19px; }
.ic { display: inline-block; vertical-align: middle; width: 14px; height: 12px; margin: -2px 1px 0; }

/* Taskbar */
.taskbar {
  height: 30px; flex: none; display: flex; align-items: stretch;
  background: linear-gradient(#1f4fc4, #3f80f0 8%, #2663e0 20%, #245edc 85%, #1a44a8);
  color: #fff; font-size: 10px;
}
.start {
  width: 97px; flex: none; display: flex; align-items: center; gap: 9px; padding-left: 10px;
  background: linear-gradient(#2f7a30, #62b862 10%, #3c9a3c 25%, #3a963a 80%, #2a6e2a);
  border-radius: 0 10px 10px 0 / 0 15px 15px 0; box-shadow: 1px 0 3px #123c88;
}
.start svg { width: 20px; height: 18px; }
.start span { font-size: 18px; line-height: 26px; font-style: italic; text-shadow: 1px 1px 1px #1d4c1d; }
.quick { width: 102px; flex: none; display: flex; align-items: center; gap: 7px; padding-left: 11px; }
.quick svg { width: 16px; height: 16px; }
.more { font-size: 14px; margin: -10px 0 0 5px; }
.tasks { flex: 1; min-width: 0; display: flex; gap: 2px; padding: 3px 14px 1px 0; }
.task {
  flex: 1; min-width: 0; display: flex; align-items: center; gap: 5px; padding-left: 8px; border-radius: 2px;
  background: linear-gradient(#6ba0fa, #3c81f3 15%, #3a7ef0 80%, #2c68dc); white-space: nowrap; line-height: 18px;
}
.task svg { width: 16px; height: 16px; }
.task .zh { margin-right: -5px; }
.zh { font-size: 12px; }
.task.on { background: #1e4fb8; box-shadow: inset 1px 1px 2px #10307c; padding-left: 12px; gap: 6px; }
.task.on svg { width: 14px; height: 12px; }
.cmd { font: bold 7px "Liberation Mono", monospace; fill: #fff; }
.ati { font: italic bold 9px "Liberation Sans", sans-serif; fill: #fff; }
.tray {
  flex: none; width: 184px; display: flex; align-items: center; gap: 2px; padding-left: 9px;
  background: linear-gradient(#0c74c8, #1cb0f6 10%, #149ae8 25%, #1290e0 80%, #0c6cc0); border-left: 1px solid #0a4a9c;
}
.tray svg { width: 16px; height: 16px; }
.tray time { font-size: 10px; margin-left: 6px; }
```
